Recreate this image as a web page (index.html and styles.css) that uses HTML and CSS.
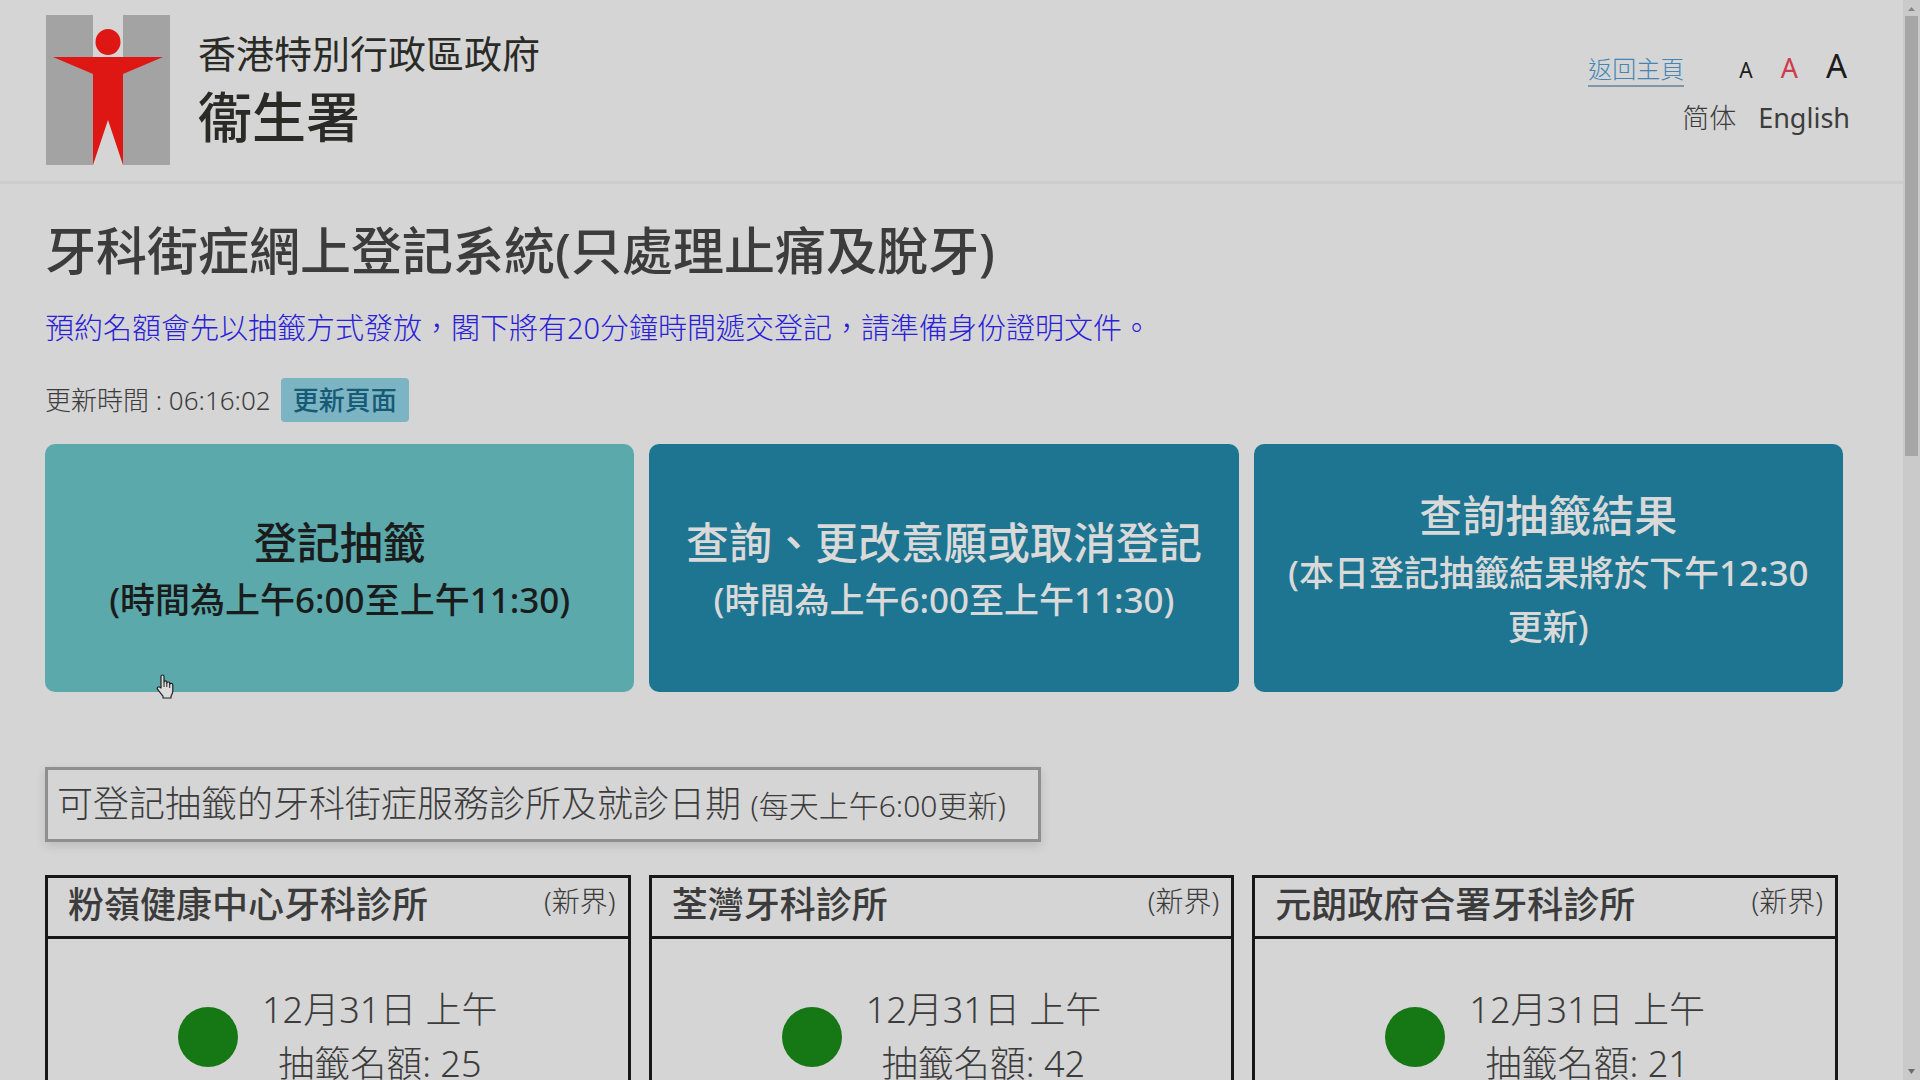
FILE: index.html
```html
<!DOCTYPE html>
<html lang="zh-Hant-HK">
<head>
<meta charset="utf-8">
<title>牙科街症網上登記系統</title>
<link rel="stylesheet" href="styles.css">
</head>
<body>
<div class="window">
  <div class="page">
    <header class="header">
      <div class="brand">
        <svg class="logo" viewBox="0 0 124 150" aria-hidden="true">
          <path fill="#a3a3a3" d="M0 0h47v150H0zM77 0h47v150H77z"/>
          <ellipse cx="62" cy="27" rx="12.5" ry="13" fill="#df1714"/>
          <path fill="#df1714" d="M7 42H117L77 59V150L62 105L47 150V59z"/>
        </svg>
        <div class="brand-text">
          <span class="government">香港特別行政區政府</span>
          <span class="department">衞生署</span>
        </div>
      </div>
      <nav class="tools">
        <div class="tools-row">
          <a class="home" href="#">返回主頁</a>
          <div class="sizes">
            <button class="size size-small" type="button">A</button>
            <button class="size size-medium" type="button">A</button>
            <button class="size size-large" type="button">A</button>
          </div>
        </div>
        <div class="languages">
          <a class="language" href="#" lang="zh-Hans">简体</a>
          <a class="language" href="#" lang="en">English</a>
        </div>
      </nav>
    </header>

    <main class="main">
      <h1 class="title">牙科街症網上登記系統(只處理止痛及脫牙)</h1>
      <p class="notice">預約名額會先以抽籤方式發放，閣下將有20分鐘時間遞交登記，請準備身份證明文件。</p>
      <div class="update">
        <span>更新時間 : 06:16:02</span>
        <button class="refresh" type="button">更新頁面</button>
      </div>

      <div class="actions">
        <button class="action action-open" type="button">
          <span class="action-title">登記抽籤</span>
          <span class="action-note">(時間為上午6:00至上午11:30)</span>
        </button>
        <button class="action" type="button">
          <span class="action-title">查詢、更改意願或取消登記</span>
          <span class="action-note">(時間為上午6:00至上午11:30)</span>
        </button>
        <button class="action" type="button">
          <span class="action-title">查詢抽籤結果</span>
          <span class="action-note">(本日登記抽籤結果將於下午12:30更新)</span>
        </button>
      </div>

      <h2 class="section">可登記抽籤的牙科街症服務診所及就診日期 <small class="section-note">(每天上午6:00更新)</small></h2>

      <div class="clinics">
        <article class="clinic">
          <header class="clinic-head">
            <h3 class="clinic-name">粉嶺健康中心牙科診所</h3>
            <span class="district">(新界)</span>
          </header>
          <div class="session">
            <span class="status"></span>
            <p class="quota">12月31日 上午<br>抽籤名額: 25</p>
          </div>
        </article>
        <article class="clinic">
          <header class="clinic-head">
            <h3 class="clinic-name">荃灣牙科診所</h3>
            <span class="district">(新界)</span>
          </header>
          <div class="session">
            <span class="status"></span>
            <p class="quota">12月31日 上午<br>抽籤名額: 42</p>
          </div>
        </article>
        <article class="clinic">
          <header class="clinic-head">
            <h3 class="clinic-name">元朗政府合署牙科診所</h3>
            <span class="district">(新界)</span>
          </header>
          <div class="session">
            <span class="status"></span>
            <p class="quota">12月31日 上午<br>抽籤名額: 21</p>
          </div>
        </article>
      </div>
    </main>
  </div>

  <div class="scrollbar" aria-hidden="true">
    <svg class="arrow" viewBox="0 0 17 16"><path fill="#858585" d="M5 11L8.500 7L12 11z"/></svg>
    <div class="track"><div class="thumb"></div></div>
    <svg class="arrow" viewBox="0 0 17 16"><path fill="#6c6c6c" d="M5 5L8.500 10L12 5z"/></svg>
  </div>

  <svg class="pointer" viewBox="0 0 18 25" aria-hidden="true">
    <path fill="#dcdcdc" stroke="#222" stroke-width="1.200" stroke-linejoin="round" d="M5 14V2.500C5 .5 8 .5 8 2.500V8C8 6.500 10.800 6.500 10.800 8.200V9C11 7.500 13.700 7.700 13.700 9.400V10.200C14.200 8.900 16.800 9.200 16.800 11V17C16.800 19.500 15.500 20.500 15 22.500V24H7V22C5 19.500 3.500 18 1.500 15.200C.5 13.500 2.500 12 4 13.300z"/>
    <path fill="none" stroke="#222" d="M8 8V13M10.800 9V13M13.700 10V14"/>
  </svg>
</div>
</body>
</html>
```
FILE: styles.css
```css
* {
  box-sizing: border-box;
}

body {
  margin: 0;
  background: #d5d5d5;
  color: #3c3c3c;
  font-family: "Noto Sans", "Noto Sans CJK TC", sans-serif;
}

h1, h2, h3, p {
  margin: 0;
}

button {
  border: 0;
  padding: 0;
  background: none;
  font-family: inherit;
  cursor: pointer;
}

a {
  color: inherit;
  text-decoration: none;
}

.window {
  position: relative;
  display: flex;
  height: 100vh;
  overflow: hidden;
}

.page {
  flex: 1;
  min-width: 0;
}

/* Header */
.header {
  display: flex;
  justify-content: space-between;
  align-items: flex-start;
  padding: 15px 53px 16px 46px;
  border-bottom: 3px solid #cdcdcd;
}

.brand {
  display: flex;
  gap: 28px;
}

.logo {
  width: 124px;
  height: 150px;
}

.brand-text {
  display: flex;
  flex-direction: column;
  padding-top: 10px;
  color: #2a2b26;
}

.government {
  font-size: 38px;
  line-height: 56px;
}

.department {
  font-size: 54px;
  font-weight: 500;
  line-height: 72px;
}

.tools {
  display: flex;
  flex-direction: column;
  align-items: flex-end;
  gap: 12px;
  padding-top: 33px;
}

.tools-row {
  display: flex;
  align-items: baseline;
  gap: 55px;
  padding-right: 3px;
}

.home {
  border-bottom: 2px solid #7f97a9;
  color: #4485b4;
  font-size: 24px;
  font-weight: 300;
  line-height: 32px;
}

.sizes {
  display: flex;
  align-items: baseline;
  gap: 28px;
}

.size {
  color: #1c1c1c;
  line-height: 36px;
}

.size-small {
  font-size: 21px;
}

.size-medium {
  color: #cf3b4a;
  font-size: 27px;
}

.size-large {
  font-size: 33px;
}

.languages {
  display: flex;
  gap: 22px;
  font-size: 27px;
  line-height: 36px;
}

.language:lang(zh-Hans) {
  font-family: "Noto Sans", "Noto Sans CJK SC", sans-serif;
  font-weight: 300;
}

/* Main content */
.main {
  padding: 30px 60px 40px 45px;
}

.title {
  font-size: 51px;
  font-weight: 500;
  line-height: 72px;
}

.notice {
  padding-top: 20px;
  color: #2a20d8;
  font-size: 29px;
  font-weight: 300;
  line-height: 44px;
}

.update {
  display: flex;
  align-items: center;
  gap: 10px;
  padding-top: 28px;
  font-size: 26px;
  font-weight: 300;
  line-height: 44px;
}

.refresh {
  padding: 0 12px;
  border-radius: 4px;
  background: #7cb4c4;
  color: #175a75;
  font-size: 26px;
  font-weight: 500;
  line-height: 44px;
}

.actions {
  display: grid;
  grid-template-columns: repeat(3, 1fr);
  gap: 15px;
  padding-top: 22px;
}

.action {
  display: flex;
  flex-direction: column;
  align-items: center;
  justify-content: center;
  min-height: 248px;
  padding: 3px 24px 0;
  border-radius: 10px;
  background: #1d7591;
  color: #d9d9d9;
  font-weight: 500;
}

.action-open {
  background: #5ca9ab;
  color: #1a1c1c;
}

.action-title {
  font-size: 43px;
  line-height: 60px;
}

.action-note {
  font-size: 35px;
  line-height: 54px;
}

/* Clinics */
.section {
  width: fit-content;
  margin-top: 75px;
  padding: 7px 32px 6px 9px;
  border: 3px solid #8e8f8e;
  box-shadow: 0 4px 10px rgba(0, 0, 0, 0.12);
  font-size: 36px;
  font-weight: 300;
  line-height: 54px;
}

.section-note {
  font-size: 30px;
}

.clinics {
  display: grid;
  grid-template-columns: repeat(3, 1fr);
  gap: 18px;
  padding: 33px 5px 0 0;
}

.clinic {
  border: 3px solid #181818;
}

.clinic-head {
  display: flex;
  justify-content: space-between;
  padding: 0 12px 4px 20px;
  border-bottom: 3px solid #181818;
}

.clinic-name {
  font-size: 36px;
  font-weight: 500;
  line-height: 54px;
}

.district {
  font-size: 28px;
  font-weight: 300;
  line-height: 46px;
}

.session {
  display: flex;
  align-items: center;
  justify-content: center;
  gap: 24px;
  padding: 44px 0;
}

.status {
  width: 60px;
  height: 60px;
  border-radius: 50%;
  background: #157815;
}

.quota {
  font-size: 36px;
  font-weight: 300;
  line-height: 54px;
  text-align: center;
}

/* Scrollbar */
.scrollbar {
  display: flex;
  flex-direction: column;
  width: 17px;
  background: #cacaca;
}

.arrow {
  width: 17px;
  height: 16px;
}

.track {
  flex: 1;
  padding: 0 2px;
}

.thumb {
  height: 42%;
  background: #a6a6a6;
}

.pointer {
  position: absolute;
  top: 674px;
  left: 156px;
  width: 18px;
  height: 25px;
}
```
